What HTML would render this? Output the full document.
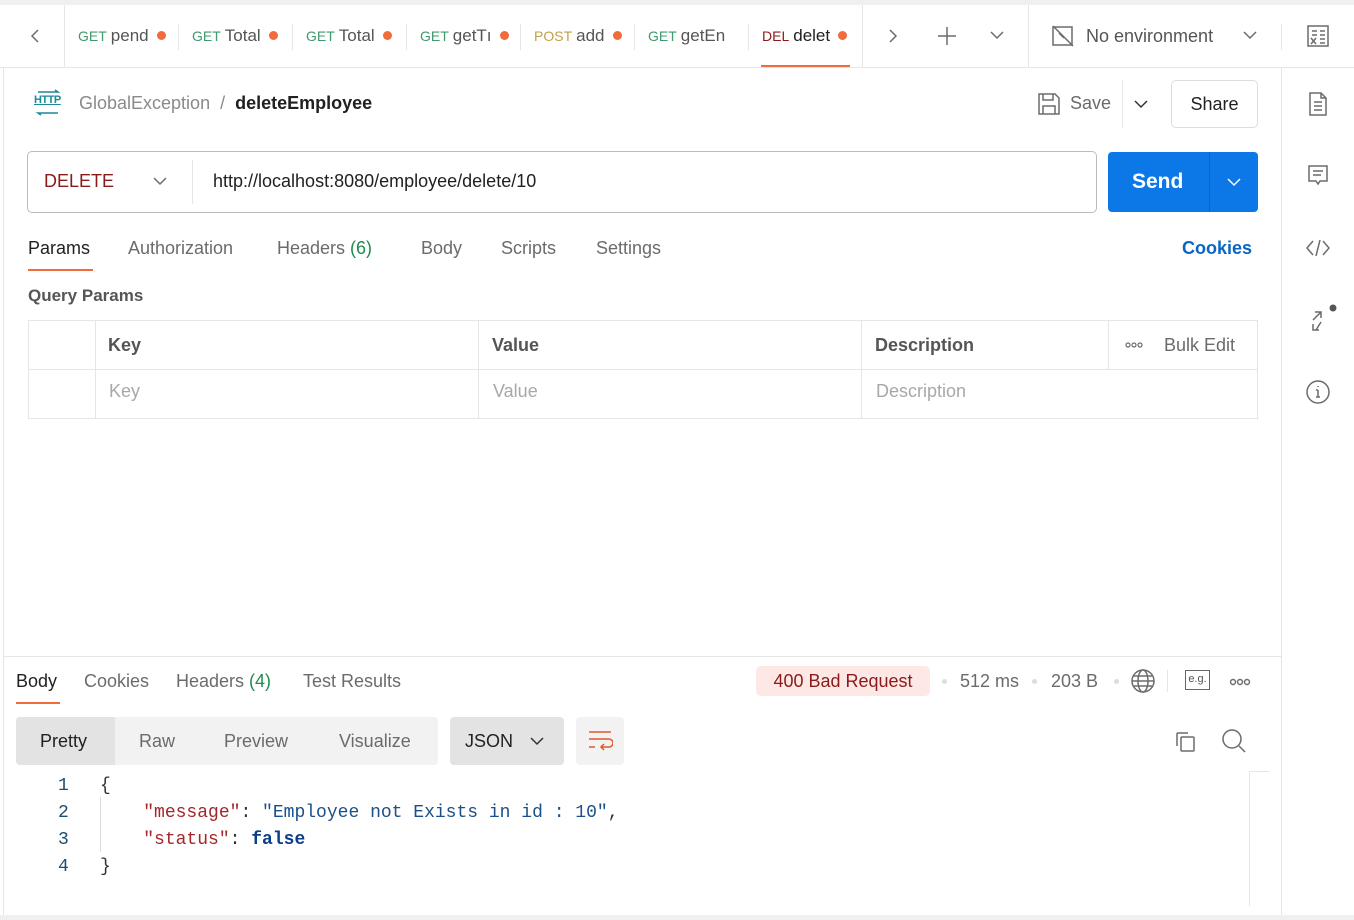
<!DOCTYPE html>
<html><head><style>
*{box-sizing:border-box;margin:0;padding:0}
body{width:1354px;height:920px;overflow:hidden;background:#fff;font-family:"Liberation Sans",sans-serif;color:#212121;position:relative}
.a{position:absolute}
.tab{position:absolute;top:26px;font-size:17px;color:#555;white-space:nowrap}
.m{font-size:14px;margin-right:4px}
.dot{display:inline-block;width:9px;height:9px;border-radius:50%;background:#f26b3a;margin-left:8px;vertical-align:1px}
.sep{position:absolute;top:24px;width:1px;height:26px;background:#e6e6e6}
svg{position:absolute;fill:none;stroke:#6b6b6b;stroke-width:1.5}
.t{position:absolute;font-size:18px;color:#6b6b6b}
.code{position:absolute;font-family:"Liberation Mono",monospace;font-size:18px}
</style></head><body>
<div class="a" style="left:0;top:0;width:1354px;height:5px;background:#f0f0f0"></div>
<div class="a" style="left:0;top:67px;width:1354px;height:1px;background:#e6e6e6"></div>
<div class="a" style="left:64px;top:5px;width:1px;height:62px;background:#e6e6e6"></div>
<div class="a" style="left:862px;top:5px;width:1px;height:62px;background:#e6e6e6"></div>
<div class="a" style="left:1028px;top:5px;width:1px;height:62px;background:#e6e6e6"></div>
<div class="a" style="left:1281px;top:24px;width:1px;height:26px;background:#e6e6e6"></div>
<div class="a" style="left:1281px;top:67px;width:1px;height:853px;background:#e6e6e6"></div>
<div class="a" style="left:3px;top:67px;width:1px;height:850px;background:#e6e6e6"></div>
<div class="a" style="left:0;top:915px;width:1354px;height:5px;background:#f0f0f0"></div>
<svg style="left:28px;top:28px" width="14" height="16"><path d="M10 2L4 8l6 6"/></svg>
<div class="tab" style="left:78px"><span class="m" style="color:#3f9a6e">GET</span>pend<span class="dot"></span></div>
<div class="sep" style="left:178px"></div>
<div class="tab" style="left:192px"><span class="m" style="color:#3f9a6e">GET</span>Total<span class="dot"></span></div>
<div class="sep" style="left:292px"></div>
<div class="tab" style="left:306px"><span class="m" style="color:#3f9a6e">GET</span>Total<span class="dot"></span></div>
<div class="sep" style="left:406px"></div>
<div class="tab" style="left:420px"><span class="m" style="color:#3f9a6e">GET</span>getTı<span class="dot"></span></div>
<div class="sep" style="left:520px"></div>
<div class="tab" style="left:534px"><span class="m" style="color:#c0a04a">POST</span>add<span class="dot"></span></div>
<div class="sep" style="left:634px"></div>
<div class="tab" style="left:648px"><span class="m" style="color:#3f9a6e">GET</span>getEn</div>
<div class="sep" style="left:748px"></div>
<div class="tab" style="left:762px;color:#212121"><span class="m" style="color:#8b1a1a">DEL</span>delet<span class="dot"></span></div>
<div class="a" style="left:761px;top:65px;width:89px;height:2px;background:#f26b3a"></div>
<svg style="left:886px;top:28px" width="14" height="16"><path d="M4 2l6 6-6 6"/></svg>
<svg style="left:936px;top:25px" width="22" height="22"><path d="M11 2v18M2 11h18"/></svg>
<svg style="left:989px;top:29px" width="16" height="12"><path d="M2 3l6 6 6-6"/></svg>
<svg style="left:1051px;top:24px" width="24" height="24"><rect x="2" y="3" width="19" height="18"/><path d="M2 2l20 20M8 9l5 5"/></svg>
<div class="t" style="left:1086px;top:26px;color:#555">No environment</div>
<svg style="left:1242px;top:29px" width="16" height="12"><path d="M2 3l6 6 6-6"/></svg>
<svg style="left:1307px;top:24px" width="22" height="24"><rect x="1" y="2" width="20" height="20"/><path d="M5 7h5M13 7h5M5 11h5M13 11h5M13 15h5M13 19h5M4 14l5 6M9 14l-5 6"/></svg>
<div class="a" style="left:34px;top:94px;font-size:11px;color:#1b8a96;text-decoration:underline;font-weight:bold;letter-spacing:-0.5px">HTTP</div>
<svg style="left:34px;top:89px;stroke:#1b8a96" width="28" height="28"><path d="M4 3h20l-3-2M24 24H4l3 2"/></svg>
<div class="a" style="left:79px;top:93px;font-size:18px;color:#8a8a8a">GlobalException &nbsp;/ &nbsp;<span style="color:#212121;font-weight:bold">deleteEmployee</span></div>
<svg style="left:1037px;top:92px" width="24" height="24"><path d="M2 2h16l4 4v16H2zM6 2v6h10V2M6 22v-8h12v8"/></svg>
<div class="t" style="left:1070px;top:93px">Save</div>
<div class="a" style="left:1122px;top:80px;width:1px;height:48px;background:#e6e6e6"></div>
<svg style="left:1133px;top:98px" width="16" height="12"><path d="M2 3l6 6 6-6" style="stroke:#333"/></svg>
<div class="a" style="left:1171px;top:80px;width:87px;height:48px;border:1px solid #ddd;border-radius:5px;font-size:18px;text-align:center;line-height:46px;color:#212121">Share</div>
<div class="a" style="left:27px;top:151px;width:1070px;height:62px;border:1px solid #bbb;border-radius:5px"></div>
<div class="a" style="left:44px;top:171px;font-size:18px;color:#8b1a1a">DELETE</div>
<svg style="left:152px;top:175px" width="16" height="12"><path d="M2 3l6 6 6-6"/></svg>
<div class="a" style="left:192px;top:160px;width:1px;height:44px;background:#e6e6e6"></div>
<div class="a" style="left:213px;top:171px;font-size:18px;color:#212121">http://localhost:8080/employee/delete/10</div>
<div class="a" style="left:1108px;top:152px;width:150px;height:60px;background:#0c78e8;border-radius:4px"></div>
<div class="a" style="left:1209px;top:152px;width:1px;height:60px;background:#0a64c4"></div>
<div class="a" style="left:1132px;top:170px;font-size:21px;font-weight:bold;color:#fff">Send</div>
<svg style="left:1226px;top:176px;stroke:#fff" width="16" height="12"><path d="M2 3l6 6 6-6"/></svg>
<div class="t" style="left:28px;top:238px;color:#212121">Params</div>
<div class="a" style="left:28px;top:269px;width:65px;height:2px;background:#f26b3a"></div>
<div class="t" style="left:128px;top:238px">Authorization</div>
<div class="t" style="left:277px;top:238px">Headers <span style="color:#1f8b4c">(6)</span></div>
<div class="t" style="left:421px;top:238px">Body</div>
<div class="t" style="left:501px;top:238px">Scripts</div>
<div class="t" style="left:596px;top:238px">Settings</div>
<div class="a" style="left:1182px;top:238px;font-size:18px;font-weight:bold;color:#0a66c2">Cookies</div>
<div class="a" style="left:28px;top:286px;font-size:17px;font-weight:bold;color:#555">Query Params</div>
<div class="a" style="left:28px;top:320px;width:1230px;height:99px;border:1px solid #e6e6e6"></div>
<div class="a" style="left:28px;top:369px;width:1230px;height:1px;background:#e6e6e6"></div>
<div class="a" style="left:95px;top:320px;width:1px;height:99px;background:#e6e6e6"></div>
<div class="a" style="left:478px;top:320px;width:1px;height:99px;background:#e6e6e6"></div>
<div class="a" style="left:861px;top:320px;width:1px;height:99px;background:#e6e6e6"></div>
<div class="a" style="left:1108px;top:320px;width:1px;height:49px;background:#e6e6e6"></div>
<div class="a" style="left:108px;top:335px;font-size:18px;font-weight:bold;color:#555">Key</div>
<div class="a" style="left:492px;top:335px;font-size:18px;font-weight:bold;color:#555">Value</div>
<div class="a" style="left:875px;top:335px;font-size:18px;font-weight:bold;color:#555">Description</div>
<svg style="left:1125px;top:341px;stroke-width:1.2" width="18" height="8"><circle cx="3" cy="4" r="2"/><circle cx="9" cy="4" r="2"/><circle cx="15" cy="4" r="2"/></svg>
<div class="t" style="left:1164px;top:335px">Bulk Edit</div>
<div class="a" style="left:109px;top:381px;font-size:18px;color:#a8a8a8">Key</div>
<div class="a" style="left:493px;top:381px;font-size:18px;color:#a8a8a8">Value</div>
<div class="a" style="left:876px;top:381px;font-size:18px;color:#a8a8a8">Description</div>
<svg style="left:1308px;top:91px" width="20" height="26"><path d="M2 2h11l5 5v17H2zM13 2v5h5M6 11h8M6 15h8M6 19h8"/></svg>
<svg style="left:1307px;top:164px" width="22" height="24"><path d="M2 2h18v15H13l-2 3-2-3H2zM6 7h10M6 11h8"/></svg>
<svg style="left:1305px;top:238px" width="26" height="20"><path d="M8 3L2 10l6 7M18 3l6 7-6 7M15 2l-4 16"/></svg>
<svg style="left:1308px;top:302px" width="32" height="30"><path d="M5 18l8-8M7 10h6v6M13 20l-5 8M5 22v6h6"/><circle cx="25" cy="6" r="3.5" fill="#555" stroke="none"/></svg>
<svg style="left:1305px;top:379px" width="26" height="26"><circle cx="13" cy="13" r="11"/><path d="M13 11v7M11 11h2M11 18h4M13 7v1"/></svg>
<div class="a" style="left:4px;top:656px;width:1277px;height:1px;background:#e6e6e6"></div>
<div class="t" style="left:16px;top:671px;color:#212121">Body</div>
<div class="a" style="left:16px;top:702px;width:44px;height:2px;background:#f26b3a"></div>
<div class="t" style="left:84px;top:671px">Cookies</div>
<div class="t" style="left:176px;top:671px">Headers <span style="color:#1f8b4c">(4)</span></div>
<div class="t" style="left:303px;top:671px">Test Results</div>
<div class="a" style="left:756px;top:666px;width:174px;height:30px;background:#fde8e6;border-radius:5px;font-size:18px;color:#8b1a1a;line-height:30px;text-align:center">400 Bad Request</div>
<div class="a" style="left:942px;top:679px;width:5px;height:5px;border-radius:50%;background:#ddd"></div>
<div class="t" style="left:960px;top:671px">512 ms</div>
<div class="a" style="left:1032px;top:679px;width:5px;height:5px;border-radius:50%;background:#ddd"></div>
<div class="t" style="left:1051px;top:671px">203 B</div>
<div class="a" style="left:1114px;top:679px;width:5px;height:5px;border-radius:50%;background:#ddd"></div>
<svg style="left:1130px;top:668px" width="26" height="26"><circle cx="13" cy="13" r="11"/><ellipse cx="13" cy="13" rx="5" ry="11"/><path d="M2 13h22M4 8h18M4 18h18"/></svg>
<div class="a" style="left:1167px;top:670px;width:1px;height:22px;background:#e6e6e6"></div>
<div class="a" style="left:1185px;top:670px;width:25px;height:20px;border:1.5px solid #666;font-size:11px;color:#555;text-align:center;line-height:17px">e.g.</div>
<svg style="left:1229px;top:677px;stroke-width:1.4" width="24" height="10"><circle cx="4" cy="5" r="2.5"/><circle cx="11" cy="5" r="2.5"/><circle cx="18" cy="5" r="2.5"/></svg>
<div class="a" style="left:16px;top:717px;width:422px;height:48px;background:#f2f2f2;border-radius:4px"></div>
<div class="a" style="left:16px;top:717px;width:99px;height:48px;background:#e3e3e3;border-radius:4px 0 0 4px"></div>
<div class="t" style="left:40px;top:731px;color:#212121">Pretty</div>
<div class="t" style="left:139px;top:731px">Raw</div>
<div class="t" style="left:224px;top:731px">Preview</div>
<div class="t" style="left:339px;top:731px">Visualize</div>
<div class="a" style="left:450px;top:717px;width:114px;height:48px;background:#e3e3e3;border-radius:4px"></div>
<div class="t" style="left:465px;top:731px;color:#212121">JSON</div>
<svg style="left:529px;top:735px" width="16" height="12"><path d="M2 3l6 6 6-6" style="stroke:#333"/></svg>
<div class="a" style="left:576px;top:717px;width:48px;height:48px;background:#f2f2f2;border-radius:4px"></div>
<svg style="left:587px;top:729px;stroke:#e0582b" width="26" height="24"><path d="M2 3h22M2 10h20a4 4 0 010 8h-8M17 15l-3 3 3 3M2 18h6"/></svg>
<svg style="left:1174px;top:730px" width="24" height="24"><rect x="7" y="7" width="13" height="14" rx="1"/><path d="M3 16V4a1 1 0 011-1h10"/></svg>
<svg style="left:1221px;top:728px" width="26" height="26"><circle cx="11" cy="11" r="9"/><path d="M18 18l6 6"/></svg>
<div class="a" style="left:1249px;top:771px;width:1px;height:135px;background:#e6e6e6"></div>
<div class="a" style="left:1249px;top:771px;width:20px;height:1px;background:#e6e6e6"></div>
<div class="code" style="left:58px;top:773px;color:#1c4c6e;line-height:27px">1<br>2<br>3<br>4</div>
<div class="a" style="left:100px;top:797px;width:1px;height:55px;background:#ddd"></div>
<div class="code" style="left:100px;top:773px;line-height:27px;white-space:pre;color:#333">{
    <span style="color:#a3262a">"message"</span>: <span style="color:#1a4f8a">"Employee not Exists in id : 10"</span>,
    <span style="color:#a3262a">"status"</span>: <b style="color:#0b3e8a">false</b>
}</div>
</body></html>
